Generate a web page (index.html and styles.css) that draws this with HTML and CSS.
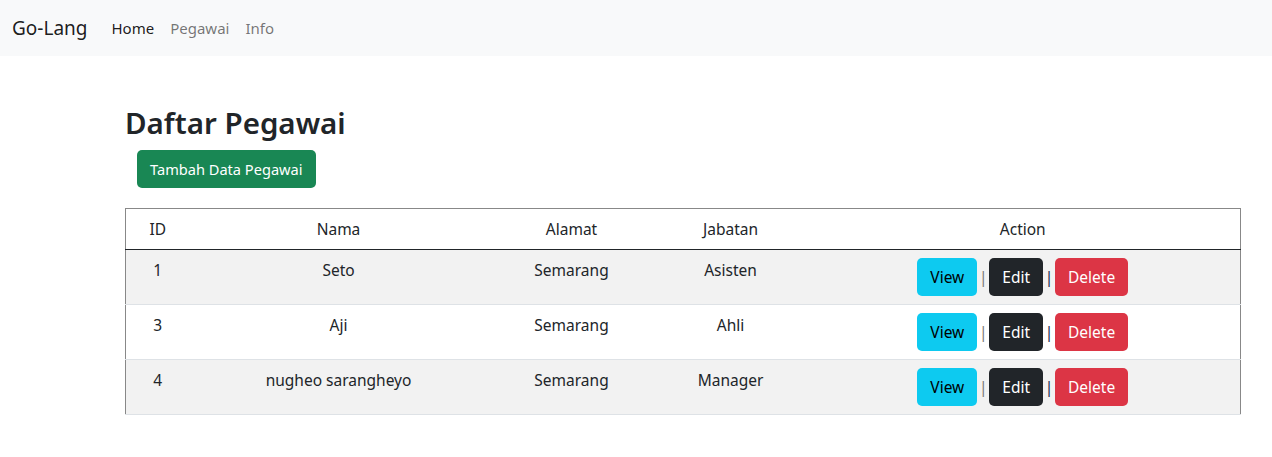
FILE: index.html
```html
<!DOCTYPE html>
<html lang="id">
<head>
<meta charset="utf-8">
<title>Go-Lang</title>
<link rel="stylesheet" href="styles.css">
</head>
<body>
<nav class="navbar">
  <a class="brand" href="#">Go-Lang</a>
  <ul class="nav">
    <li><a class="nav-link active" href="#">Home</a></li>
    <li><a class="nav-link" href="#">Pegawai</a></li>
    <li><a class="nav-link" href="#">Info</a></li>
  </ul>
</nav>
<main class="content">
  <h2 class="title">Daftar Pegawai</h2>
  <div class="actions-top">
    <a class="btn btn-success" href="#">Tambah Data Pegawai</a>
  </div>
  <table class="table">
    <colgroup>
      <col class="c-id"><col class="c-nama"><col class="c-alamat"><col class="c-jabatan"><col class="c-action">
    </colgroup>
    <thead>
      <tr><th>ID</th><th>Nama</th><th>Alamat</th><th>Jabatan</th><th>Action</th></tr>
    </thead>
    <tbody>
      <tr>
        <td>1</td><td>Seto</td><td>Semarang</td><td>Asisten</td>
        <td><div class="btns"><a class="btn btn-info" href="#">View</a><span class="sep sep1">|</span><a class="btn btn-dark" href="#">Edit</a><span class="sep sep2">|</span><a class="btn btn-danger" href="#">Delete</a></div></td>
      </tr>
      <tr>
        <td>3</td><td>Aji</td><td>Semarang</td><td>Ahli</td>
        <td><div class="btns"><a class="btn btn-info" href="#">View</a><span class="sep sep1">|</span><a class="btn btn-dark" href="#">Edit</a><span class="sep sep2">|</span><a class="btn btn-danger" href="#">Delete</a></div></td>
      </tr>
      <tr>
        <td>4</td><td>nugheo sarangheyo</td><td>Semarang</td><td>Manager</td>
        <td><div class="btns"><a class="btn btn-info" href="#">View</a><span class="sep sep1">|</span><a class="btn btn-dark" href="#">Edit</a><span class="sep sep2">|</span><a class="btn btn-danger" href="#">Delete</a></div></td>
      </tr>
    </tbody>
  </table>
</main>
</body>
</html>
```
FILE: styles.css
```css
* { box-sizing: border-box; }
body {
  margin: 0;
  font-family: "Noto Sans", "Open Sans", sans-serif;
  font-size: 15.5px;
  line-height: 24px;
  color: #212529;
  background: #fff;
}
a { text-decoration: none; }

.navbar {
  display: flex;
  align-items: center;
  height: 56px;
  padding: 8px 12px;
  background: #f8f9fa;
}
.brand {
  font-size: 19px;
  line-height: 30px;
  color: rgba(0,0,0,0.9);
  margin-right: 16px;
}
.nav {
  display: flex;
  list-style: none;
  margin: 0;
  padding: 0;
}
.nav-link {
  display: block;
  padding: 8px;
  font-size: 15px;
  color: rgba(0,0,0,0.55);
}
.nav-link.active { color: rgba(0,0,0,0.9); }

.content {
  margin: 48px 31px 0 125px;
}
.title {
  margin: 0 0 8px;
  font-size: 29.5px;
  font-weight: 600;
  line-height: 38.4px;
}
.actions-top {
  padding-left: 12px;
  margin-bottom: 20px;
}
.btn {
  display: inline-block;
  padding: 6px 12px;
  font-size: 15.5px;
  line-height: 24px;
  border-radius: 5px;
  border: 1px solid transparent;
}
.btn-success { background: #198754; color: #fff; font-size: 14.6px; }
.btn-info { background: #0dcaf0; color: #000; }
.btn-dark { background: #212529; color: #fff; }
.btn-danger { background: #dc3545; color: #fff; }

.table {
  width: 100%;
  border-collapse: collapse;
  border: 1px solid #888;
  border-bottom: none;
}
.c-id { width: 64px; }
.c-nama { width: 298px; }
.c-alamat { width: 168px; }
.c-jabatan { width: 150px; }
.table th, .table td {
  padding: 8px;
  text-align: center;
  vertical-align: top;
  font-weight: 400;
  border-bottom: 1px solid #dee2e6;
}
.table thead th { border-bottom: 1px solid #212529; }
.table tbody tr:nth-child(odd) td { background: #f2f2f2; }
.btns {
  display: flex;
  justify-content: center;
  align-items: center;
}
.sep {
  width: 12px;
  text-align: center;
}
.sep1 { color: #777; }
.sep2 { color: #1d2a4d; }
```
